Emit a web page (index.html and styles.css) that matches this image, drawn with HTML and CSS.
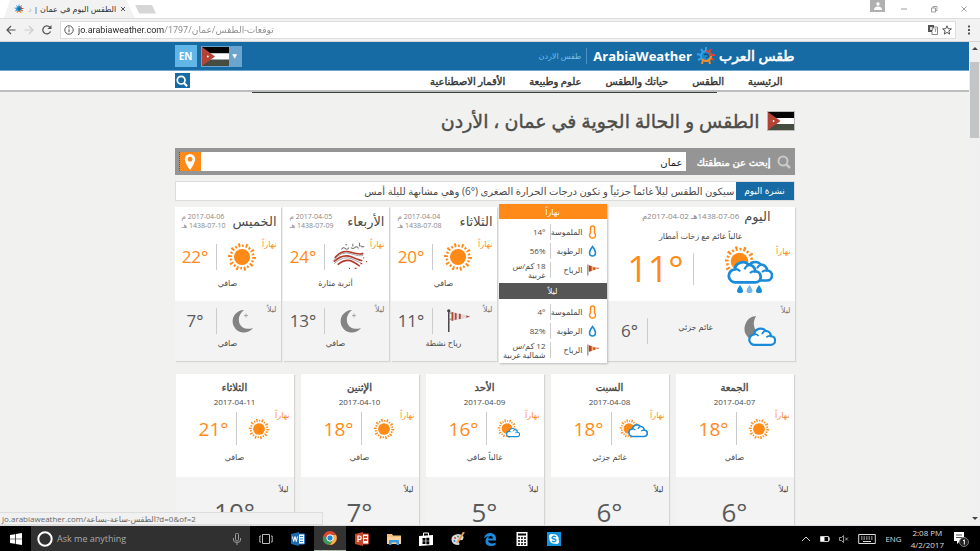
FILE: index.html
```html
<!DOCTYPE html>
<html lang="ar">
<head>
<meta charset="utf-8">
<title>الطقس اليوم في عمان</title>
<link rel="stylesheet" href="styles.css">
</head>
<body>
<svg class="sprite" aria-hidden="true">
  <symbol id="sun" viewBox="0 0 30 30">
    <circle cx="15" cy="15" r="8" fill="#ff8a17"/>
    <circle cx="15" cy="15" r="12" fill="none" stroke="#ff8a17" stroke-width="4" pathLength="10" stroke-dasharray=".26 .74"/>
    <circle cx="15" cy="15" r="11.3" fill="none" stroke="#ff8a17" stroke-width="2.400" pathLength="10" stroke-dasharray=".26 .74" stroke-dashoffset=".5"/>
  </symbol>
  <symbol id="cloud" viewBox="0 0 32 24">
    <path d="M8 21.500a6 6 0 0 1-1-12A7.500 7.500 0 0 1 20 5.500a6 6 0 0 1 6 6a5 5 0 0 1 0 10Z" fill="#fff" stroke="#1a8bd8" stroke-width="2.600"/>
    <path d="M7 9.500a5 5 0 0 1 5 2M20 5.500q-3 1-4 4M26 11.500q-3-.5-5 1.500" fill="none" stroke="#1a8bd8" stroke-width="2"/>
  </symbol>
  <symbol id="moon" viewBox="0 0 24 26">
    <path d="M14 2A11.300 11.300 0 1 0 23 20Q13 23 9.500 15.500Q7 7.500 14 2Z" fill="#838383"/>
    <path d="M16 5.500v4M14 7.500h4" stroke="#999" stroke-width=".8"/>
  </symbol>
  <symbol id="rain" viewBox="0 0 48 48">
    <use href="#sun" x="-2" y="0" width="33" height="33"/>
    <use href="#cloud" x="16" y="14" width="32" height="24"/>
    <use href="#cloud" x="1" y="14" width="37" height="26"/>
    <path d="M15 40q6 8 0 8q-6 0 0-8ZM34 40q6 8 0 8q-6 0 0-8Z" fill="#1a8bd8"/>
    <path d="M24.500 40q6 8 0 8q-6 0 0-8Z" fill="#7ab8e6"/>
  </symbol>
  <symbol id="moon-cloud" viewBox="0 0 32 34">
    <path d="M12 2A12.500 12.500 0 0 0 5 24L13 18Q7 11 12 2Z" fill="#838383"/>
    <use href="#cloud" x="4" y="12" width="28" height="21"/>
  </symbol>
  <symbol id="partly" viewBox="0 0 30 22">
    <use href="#sun" x="0" y="0" width="20" height="21"/>
    <use href="#cloud" x="9" y="4" width="20" height="17"/>
  </symbol>
  <symbol id="mostly" viewBox="0 0 24 22">
    <use href="#sun" x="0" y="0" width="20" height="21"/>
    <use href="#cloud" x="9" y="9" width="14" height="11"/>
  </symbol>
  <symbol id="dust" viewBox="0 0 38 30">
    <path d="M3 16Q10 7 20 10T33 11M2 20Q11 11 21 15T32 19M6 23Q15 16 22 20T29 25" fill="none" stroke="#b4382c" stroke-width="1.700"/>
    <path d="M1 19Q10 8 20 11.500T33 13M2 22Q13 13 21 17T31 21" fill="none" stroke="#888" stroke-width=".8"/>
    <path d="M10 7q2-3 4-1t4-1M20 5q2 2 4 0t4 1M30 3q2 2 4 1M14 2h2M22 1v3M29 0v4" fill="none" stroke="#777" stroke-width="1.100"/>
    <path d="M33 16h1M18 27h1M24 27h2M30 22h2M36 20h1" stroke="#b4382c" stroke-width="1.300"/>
  </symbol>
  <symbol id="sock" viewBox="0 0 26 26">
    <path d="M3 1v24" stroke="#444" stroke-width="1.600"/><circle cx="3" cy="2" r="1.800" fill="#444"/>
    <path d="M3 4l4 1M3 12l4-2" stroke="#777"/>
    <path d="M6 3.500L26 7.500v1.500L6 13Z" fill="#ddd"/>
    <path d="M6 3l2 .5v9l-2 .5ZM9.500 4l2 .5v7l-2 .5ZM14 5l2 .5v5l-2 .5ZM22 7l4 1l-4 1.500Z" fill="#b84434"/>
  </symbol>
  <symbol id="small-sock" viewBox="0 0 14 12">
    <path d="M2 0v12" stroke="#666"/><path d="M3 1l11 3l-11 4Z" fill="#ffb36a"/>
    <path d="M3 1l3 1v5l-3 1ZM8 3l2 .5v2l-2 .8ZM12 3.500h2v1h-2Z" fill="#b5411f"/>
  </symbol>
  <symbol id="thermo" viewBox="0 0 8 14">
    <path d="M2 8V3a2 2 0 0 1 4 0v5a3 3 0 1 1-4 0Z" fill="#fff" stroke="#ff8a17" stroke-width="1.500"/>
  </symbol>
  <symbol id="drop" viewBox="0 0 8 12">
    <path d="M4 1.500Q7 5.500 7 8a3 3 0 0 1-6 0Q1 5.500 4 1.500Z" fill="#fff" stroke="#1a8bd8" stroke-width="1.500"/>
  </symbol>
  <symbol id="flag" viewBox="0 0 28 20" preserveAspectRatio="none">
    <path d="M0 0h28v6.700H0Z" fill="#050505"/><path d="M0 6.700h28v6.600H0Z" fill="#fff"/><path d="M0 13.300h28V20H0Z" fill="#474c40"/>
    <path d="M0 0L13.500 10L0 20Z" fill="#b44336"/><circle cx="6" cy="10" r="1" fill="#fff"/>
  </symbol>
  <symbol id="lens" viewBox="0 0 14 14">
    <circle cx="6" cy="6" r="4.500" fill="none" stroke="currentColor" stroke-width="2"/><path d="M9 9l4 4" stroke="currentColor" stroke-width="2.500"/>
  </symbol>
  <symbol id="brand" viewBox="0 0 20 20">
    <path d="M10 1v4M5 3l2 3M1 8l4 1M2 14l4-2" stroke="#2ea3ec" stroke-width="2"/>
    <path d="M15 3l-2 3M19 9h-4M18 14l-4-2" stroke="#d9452f" stroke-width="2"/>
    <path d="M6 18l1-4M14 18l-1-4" stroke="#ff8a17" stroke-width="2"/>
    <circle cx="10" cy="10" r="5" fill="#1c86cc" stroke="#2ea3ec" stroke-width="2"/>
    <path d="M10 5a5 5 0 0 1 5 5" fill="none" stroke="#d9452f" stroke-width="2"/>
    <path d="M15 10a5 5 0 0 1-9 3" fill="none" stroke="#ff8a17" stroke-width="2"/>
    <path d="M8 9q2-2 4 0t-2 3" fill="none" stroke="#0f4f80" stroke-width="1.200"/>
  </symbol>
</svg>

<div class="tabs">
  <div class="tab">
    <svg class="i10"><use href="#brand"/></svg>
    <span class="tab-title" dir="rtl">الطقس اليوم في عمان | <span>د</span></span>
    <button class="plain" aria-label="Close tab"><svg class="i6" viewBox="0 0 6 6"><path d="M1 1l4 4M5 1L1 5" stroke="#555"/></svg></button>
  </div>
  <button class="new-tab" aria-label="New tab"></button>
  <div class="window">
    <span class="person"><svg class="i8" viewBox="0 0 8 8"><circle cx="4" cy="2" r="1.700" fill="#fff"/><path d="M0 8q0-3.500 4-3.500T8 8Z" fill="#fff"/></svg></span>
    <button class="plain" aria-label="Minimize"><svg class="i8" viewBox="0 0 8 8"><path d="M1 4h6" stroke="#888" stroke-width=".8"/></svg></button>
    <button class="plain" aria-label="Restore"><svg class="i8" viewBox="0 0 8 8"><path d="M1.500 3h4v4h-4ZM3 3V1.500h4v4H5.500" fill="none" stroke="#888" stroke-width=".8"/></svg></button>
    <button class="plain" aria-label="Close"><svg class="i8" viewBox="0 0 8 8"><path d="M1.500 1.500l5 5M6.500 1.500l-5 5" stroke="#888" stroke-width=".8"/></svg></button>
  </div>
</div>
<div class="toolbar">
  <button class="plain" aria-label="Back"><svg class="i10" viewBox="0 0 10 10"><path d="M9.500 5H1M5 1L1 5l4 4" fill="none" stroke="#555" stroke-width="1.200"/></svg></button>
  <button class="plain" aria-label="Forward"><svg class="i10" viewBox="0 0 10 10"><path d="M.5 5H9M5 1l4 4l-4 4" fill="none" stroke="#ccc" stroke-width="1.200"/></svg></button>
  <button class="plain" aria-label="Reload"><svg class="i10" viewBox="0 0 10 10"><path d="M8.500 6.500A4 4 0 1 1 7.800 2.200" fill="none" stroke="#555" stroke-width="1.300"/><path d="M9.500 0v4h-4Z" fill="#555"/></svg></button>
  <div class="omnibox">
    <svg class="i10" viewBox="0 0 10 10"><circle cx="5" cy="5" r="4.200" fill="none" stroke="#555"/><path d="M5 4.300v3M5 2.200v1.200" stroke="#555"/></svg>
    <input class="url" aria-label="Address" dir="ltr" value="jo.arabiaweather.com/توقعات-الطقس/عمان/1797">
    <svg class="i10" viewBox="0 0 10 10"><path d="M0 0h6v7H0Z" fill="#555"/><path d="M6 2h3.500v7.500H4V7" fill="#fff" stroke="#888"/><path d="M2 2h2.500v3H2Z" fill="#ddd"/><path d="M6.500 4h2M7.500 4v3" stroke="#777" stroke-width=".7"/></svg>
    <svg class="i10" viewBox="0 0 10 10"><path d="M5 .8l1.200 2.900l3.200.2l-2.500 2l.8 3.200L5 7.400L2.300 9.100l.8-3.200l-2.500-2l3.200-.2Z" fill="none" stroke="#444" stroke-width=".9"/></svg>
  </div>
  <button class="plain" aria-label="Menu"><svg class="i10" viewBox="0 0 10 10"><path d="M4 .5h2v2H4ZM4 4h2v2H4ZM4 7.500h2v2H4Z" fill="#555"/></svg></button>
</div>

<div class="view">
  <div class="page" dir="rtl">
    <header class="site">
      <div class="wrap site-row">
        <span class="logo-ar">طقس العرب</span>
        <svg class="i20"><use href="#brand"/></svg>
        <b class="logo-en">ArabiaWeather</b>
        <span class="country">طقس الاردن</span>
        <button class="flag-pick" aria-label="اختر الدولة"><svg><use href="#flag"/></svg><span>▼</span></button>
        <a class="lang" href="#en">EN</a>
      </div>
    </header>
    <nav class="menu">
      <div class="wrap menu-row">
        <a href="#home">الرئيسية</a><a href="#weather">الطقس</a><a href="#life">حياتك والطقس</a><a href="#science">علوم وطبيعة</a><a href="#sat">الأقمار الاصطناعية</a>
        <button class="find" aria-label="بحث"><svg class="i12"><use href="#lens"/></svg></button>
      </div>
    </nav>
    <main class="wrap">
      <div class="banner"></div>
      <h1><svg><use href="#flag"/></svg>الطقس و الحالة الجوية في عمان ، الأردن</h1>
      <form class="search">
        <label for="area"><svg class="i14"><use href="#lens"/></svg>إبحث عن منطقتك</label>
        <input id="area" type="text" value="عمان">
        <button type="button" aria-label="تحديد الموقع"><svg viewBox="0 0 12 16"><path fill-rule="evenodd" d="M6 0a5.200 5.200 0 0 1 5.200 5.200Q11 9 6 16Q1 9 .8 5.200A5.200 5.200 0 0 1 6 0ZM6 2.800a2.400 2.400 0 1 0 .01 0Z" fill="#fff"/></svg></button>
      </form>
      <div class="bulletin"><b>نشرة اليوم</b><p>سيكون الطقس ليلاً غائماً جزئياً و تكون درجات الحرارة الصغرى (°6) وهي مشابهة لليلة أمس</p></div>

      <section class="now">
        <article class="card today">
          <div class="day">
            <h2>اليوم<span><bdi dir="ltr">1438-07-06</bdi>هـ <bdi dir="ltr">2017-04-02</bdi>م</span></h2>
            <p class="cond">غالباً غائم مع زخات أمطار</p>
            <div class="parts"><span class="when">نهاراً</span><svg class="i48"><use href="#rain"/></svg><i></i><span class="temp" dir="ltr">11°</span></div>
          </div>
          <div class="night parts"><span class="when">ليلاً</span><svg class="i32"><use href="#moon-cloud"/></svg><p>غائم جزئي</p><i></i><span class="temp" dir="ltr">6°</span></div>
        </article>
        <article class="panel">
          <h3>نهاراً</h3>
          <dl>
            <div><dt><svg class="i14"><use href="#thermo"/></svg>الملموسة</dt><dd><bdi dir="ltr">14°</bdi></dd></div>
            <div><dt><svg class="i12"><use href="#drop"/></svg>الرطوبة</dt><dd><bdi dir="ltr">56%</bdi></dd></div>
            <div><dt><svg class="i12"><use href="#small-sock"/></svg>الرياح</dt><dd>18 كم/س غربية</dd></div>
          </dl>
          <h3 class="dark">ليلاً</h3>
          <dl>
            <div><dt><svg class="i14"><use href="#thermo"/></svg>الملموسة</dt><dd><bdi dir="ltr">4°</bdi></dd></div>
            <div><dt><svg class="i12"><use href="#drop"/></svg>الرطوبة</dt><dd><bdi dir="ltr">82%</bdi></dd></div>
            <div><dt><svg class="i12"><use href="#small-sock"/></svg>الرياح</dt><dd>12 كم/س شمالية غربية</dd></div>
          </dl>
        </article>
        <article class="card near">
          <div class="day"><h2>الثلاثاء<span><bdi dir="ltr">2017-04-04</bdi> م<br><bdi dir="ltr">1438-07-08</bdi> هـ</span></h2>
            <div class="parts"><span class="when">نهاراً</span><svg class="i30"><use href="#sun"/></svg><i></i><span class="temp" dir="ltr">20°</span></div><p class="cond">صافي</p></div>
          <div class="night"><div class="parts"><span class="when">ليلاً</span><svg class="i26"><use href="#sock"/></svg><i></i><span class="temp" dir="ltr">11°</span></div><p class="cond">رياح نشطة</p></div>
        </article>
        <article class="card near">
          <div class="day"><h2>الأربعاء<span><bdi dir="ltr">2017-04-05</bdi> م<br><bdi dir="ltr">1438-07-09</bdi> هـ</span></h2>
            <div class="parts"><span class="when">نهاراً</span><svg class="i36"><use href="#dust"/></svg><i></i><span class="temp" dir="ltr">24°</span></div><p class="cond">أتربة مثارة</p></div>
          <div class="night"><div class="parts"><span class="when">ليلاً</span><svg class="i26"><use href="#moon"/></svg><i></i><span class="temp" dir="ltr">13°</span></div><p class="cond">صافي</p></div>
        </article>
        <article class="card near">
          <div class="day"><h2>الخميس<span><bdi dir="ltr">2017-04-06</bdi> م<br><bdi dir="ltr">1438-07-10</bdi> هـ</span></h2>
            <div class="parts"><span class="when">نهاراً</span><svg class="i30"><use href="#sun"/></svg><i></i><span class="temp" dir="ltr">22°</span></div><p class="cond">صافي</p></div>
          <div class="night"><div class="parts"><span class="when">ليلاً</span><svg class="i26"><use href="#moon"/></svg><i></i><span class="temp" dir="ltr">7°</span></div><p class="cond">صافي</p></div>
        </article>
      </section>

      <section class="later">
        <article class="card far"><div class="day"><h2>الجمعة</h2><time>2017-04-07</time><div class="parts"><span class="when">نهاراً</span><svg class="i22"><use href="#sun"/></svg><i></i><span class="temp" dir="ltr">18°</span></div><p class="cond">صافي</p></div><div class="night"><span class="when">ليلاً</span><span class="temp" dir="ltr">6°</span></div></article>
        <article class="card far"><div class="day"><h2>السبت</h2><time>2017-04-08</time><div class="parts"><span class="when">نهاراً</span><svg class="i30"><use href="#partly"/></svg><i></i><span class="temp" dir="ltr">18°</span></div><p class="cond">غائم جزئي</p></div><div class="night"><span class="when">ليلاً</span><span class="temp" dir="ltr">6°</span></div></article>
        <article class="card far"><div class="day"><h2>الأحد</h2><time>2017-04-09</time><div class="parts"><span class="when">نهاراً</span><svg class="i24"><use href="#mostly"/></svg><i></i><span class="temp" dir="ltr">16°</span></div><p class="cond">غالباً صافي</p></div><div class="night"><span class="when">ليلاً</span><span class="temp" dir="ltr">5°</span></div></article>
        <article class="card far"><div class="day"><h2>الإثنين</h2><time>2017-04-10</time><div class="parts"><span class="when">نهاراً</span><svg class="i22"><use href="#sun"/></svg><i></i><span class="temp" dir="ltr">18°</span></div><p class="cond">صافي</p></div><div class="night"><span class="when">ليلاً</span><span class="temp" dir="ltr">7°</span></div></article>
        <article class="card far"><div class="day"><h2>الثلاثاء</h2><time>2017-04-11</time><div class="parts"><span class="when">نهاراً</span><svg class="i22"><use href="#sun"/></svg><i></i><span class="temp" dir="ltr">21°</span></div><p class="cond">صافي</p></div><div class="night"><span class="when">ليلاً</span><span class="temp" dir="ltr">10°</span></div></article>
      </section>
    </main>
  </div>
  <div class="scroll"><svg class="i6" viewBox="0 0 6 6"><path d="M0 5l3-3l3 3Z" fill="#444"/></svg><span></span><svg class="i6" viewBox="0 0 6 6"><path d="M0 1l3 3l3-3Z" fill="#444"/></svg></div>
  <div class="status" dir="ltr">jo.arabiaweather.com/الطقس-ساعة-بساعة?d=0&amp;of=2</div>
</div>

<footer class="taskbar">
  <button class="start" aria-label="Start"><svg class="i12" viewBox="0 0 12 12"><path d="M0 2l5-.8v4.500H0ZM5.700 1L12 0v5.700H5.700ZM0 6.300h5v4.500L0 10ZM5.700 6.300H12V12l-6.300-1Z" fill="#fff"/></svg></button>
  <label class="ask"><svg class="i16" viewBox="0 0 16 16"><circle cx="8" cy="8" r="6.700" fill="none" stroke="#fff" stroke-width="2"/></svg><input type="text" aria-label="Ask me anything" placeholder="Ask me anything"><svg class="i12" viewBox="0 0 12 12"><path d="M4.500 1.500a1.500 1.500 0 0 1 3 0v5a1.500 1.500 0 0 1-3 0ZM2.500 5v2q0 2.500 3.500 2.500T9.500 7V5M6 9.500V12" fill="none" stroke="#999"/></svg></label>
  <button class="app" aria-label="Task view"><svg class="i14" viewBox="0 0 14 14"><path d="M3.500 2.500h7v9h-7ZM2 4H.8v6H2M12 4h1.200v6H12" fill="none" stroke="#bbb"/></svg></button>
  <button class="app" aria-label="Word"><svg class="i14" viewBox="0 0 14 14"><path d="M7 2h6.500v10H7Z" fill="#fff" stroke="#2b7cc0"/><path d="M9 4.500h3M9 7h3M9 9.500h3" stroke="#2b7cc0"/><path d="M0 2l8-2v14l-8-2Z" fill="#1c6bb0"/><path d="M1.500 4.500l1.200 5l1.300-5l1.300 5l1.200-5" fill="none" stroke="#fff"/></svg></button>
  <button class="app on" aria-label="Chrome"><svg class="i14" viewBox="0 0 14 14"><circle cx="7" cy="7" r="7" fill="#d9482f"/><path d="M0 5a7 7 0 0 0 7 9l2-5Z" fill="#3c9a56"/><path d="M7 14a7 7 0 0 0 6-10H7l3 5Z" fill="#f6b73c"/><circle cx="7" cy="7" r="3.200" fill="#2a83d4" stroke="#fff"/></svg></button>
  <button class="app" aria-label="PowerPoint"><svg class="i14" viewBox="0 0 14 14"><path d="M7 2h6.500v10H7Z" fill="#fff" stroke="#c8472c"/><path d="M9 5h3M9 8h3" stroke="#c8472c" stroke-width="2"/><path d="M0 2l8-2v14l-8-2Z" fill="#c8472c"/><path d="M3 10V4h1.500a1.500 1.500 0 0 1 0 3.500H3" fill="none" stroke="#fff" stroke-width="1.200"/></svg></button>
  <button class="app" aria-label="Files"><svg class="i14" viewBox="0 0 14 14"><path d="M0 2h5l1 1.500h8V12H0Z" fill="#f3c077"/><path d="M0 5h14v7H0Z" fill="#fbd09a"/><path d="M2 13V8h10v5H9.500v-2.500h-5V13Z" fill="#3a9be0"/></svg></button>
  <button class="app" aria-label="Store"><svg class="i14" viewBox="0 0 14 14"><path d="M0 4l14-1v10L0 14Z" fill="#fff"/><path d="M4.500 4V1h5V4" fill="none" stroke="#fff"/><path d="M3.500 6h3v2.700h-3ZM7.300 5.800h3v2.900h-3ZM3.500 9.300h3V12h-3ZM7.300 9.300h3v2.900h-3Z" fill="#000"/></svg></button>
  <button class="app" aria-label="Paint"><svg class="i14" viewBox="0 0 14 14"><path d="M7 2Q0 3 .5 8t7 5q2-1 0-3t4-2Q15 3 7 2Z" fill="#d7dce3"/><circle cx="4" cy="6" r="1" fill="#c8472c"/><circle cx="3.500" cy="9" r="1" fill="#2a83d4"/><circle cx="7" cy="4.500" r="1" fill="#3c9a56"/><path d="M13 0L6 11" stroke="#e99b45" stroke-width="2"/></svg></button>
  <button class="app" aria-label="Edge"><svg class="i14" viewBox="0 0 14 14"><path d="M1 6.500Q2 1 7.500 1T13 7.500v1H5q.5 3 4 3q2 0 3.500-1V13q-2 1-4 1Q2 14 2.500 8.500Q3 5 6.500 4Q3 4 1 6.500ZM5.200 6.500H10Q10 4 7.700 4T5.200 6.500Z" fill="#1b8ae0" fill-rule="evenodd"/></svg></button>
  <button class="app" aria-label="Calculator"><svg class="i14" viewBox="0 0 14 14"><path d="M1.500 0h11v14h-11Z" fill="#fff"/><path d="M3 1.500h8v2H3Z" fill="#000"/><path d="M3 6h8M3 9h8M3 12h8" stroke="#000" stroke-width="1.500" stroke-dasharray="2 1"/></svg></button>
  <button class="app" aria-label="Skype"><svg class="i14" viewBox="0 0 14 14"><path d="M0 0h14v14H0Z" fill="#0f95de"/><circle cx="7" cy="7" r="4.700" fill="#fff"/><circle cx="4.500" cy="4.500" r="2.500" fill="#fff"/><circle cx="9.500" cy="9.500" r="2.500" fill="#fff"/><path d="M9 5Q7 3.500 5.500 5T7 7t1.500 2T5 9" fill="none" stroke="#0f95de" stroke-width="1.300"/></svg></button>
  <div class="tray">
    <svg class="i10" viewBox="0 0 10 10"><path d="M1 7l4-4l4 4" fill="none" stroke="#ccc"/></svg>
    <svg class="i10" viewBox="0 0 10 10"><path d="M.5 2.500h8v5h-8ZM9 4h1v2H9Z" fill="none" stroke="#ccc"/><path d="M1 3h3.500v4H1Z" fill="#fff"/></svg>
    <svg class="i10" viewBox="0 0 10 10"><path d="M.5 3.500h2l2-2v7l-2-2h-2ZM6 3.500l3 3M9 3.500l-3 3" fill="none" stroke="#bbb" stroke-width=".8"/></svg>
    <svg class="i18" viewBox="0 0 18 12"><path d="M.7 1.500h16.600v9H.7Z" fill="none" stroke="#ddd"/><path d="M3 4h12M3 6h12" stroke="#ddd" stroke-dasharray="1.500 1"/><path d="M5 8.500h8" stroke="#ddd"/></svg>
    <span>ENG</span>
    <span class="clock">2:08 PM<br>4/2/2017</span>
    <svg class="i16" viewBox="0 0 16 16"><path d="M1 1h10v9H7l-3 3v-3H1Z" fill="#fff"/><path d="M3 4h6M3 6.500h6" stroke="#555"/><circle cx="11" cy="11" r="4.500" fill="#222" stroke="#777"/><path d="M10 10l1.300-1.300V13.500" fill="none" stroke="#fff"/></svg>
  </div>
</footer>
</body>
</html>
```

FILE: styles.css
```css
* { box-sizing: border-box; margin: 0; padding: 0; }
body { display: flex; flex-direction: column; height: 100vh; overflow: hidden; background: #fff; color: #4a4a4a; font: 8px/10px "Open Sans", "DejaVu Sans", sans-serif; }
button, input { font: inherit; border: 0; background: none; min-width: 0; }
a { color: inherit; text-decoration: none; }
svg { display: block; flex: none; }
.sprite { position: absolute; width: 0; height: 0; }
.i6 { width: 6px; height: 6px; } .i8 { width: 8px; height: 8px; } .i10 { width: 10px; height: 10px; }
.i12 { width: 12px; height: 12px; } .i14 { width: 14px; height: 14px; } .i16 { width: 16px; height: 16px; }
.i18 { width: 18px; height: 12px; } .i20 { width: 20px; height: 20px; } .i22 { width: 22px; height: 22px; }
.i24 { width: 24px; height: 22px; } .i26 { width: 24px; height: 26px; } .i30 { width: 30px; height: 30px; }
.i32 { width: 32px; height: 34px; } .i36 { width: 36px; height: 30px; } .i48 { width: 48px; height: 48px; }
.plain { display: grid; place-items: center; width: 10px; height: 10px; }

.tabs { display: flex; align-items: flex-end; flex: none; height: 19px; border-bottom: 1px solid #ddd; }
.tab { display: flex; align-items: center; gap: 4px; height: 18px; margin-left: 4px; padding: 0 9px 0 10px; background: #f2f2f2; clip-path: polygon(6px 0, 122px 0, 100% 100%, 0 100%); width: 131px; }
.tab-title { flex: 1; white-space: nowrap; color: #333; }
.tab-title span { color: #bbb; }
.new-tab { align-self: center; width: 21px; height: 9px; background: #d6d6d6; clip-path: polygon(0 0, 80% 0, 100% 100%, 20% 100%); }
.window { display: flex; align-items: center; gap: 20px; height: 18px; margin-left: auto; padding-right: 11px; }
.person { display: grid; place-items: center; align-self: flex-start; width: 15px; height: 12px; margin-right: -6px; background: #b0b0b0; }
.toolbar { display: flex; align-items: center; flex: none; gap: 8px; height: 23px; padding: 0 6px; background: #f2f2f2; border-bottom: 1px solid #d5d5d5; }
.omnibox { display: flex; align-items: center; flex: 1; gap: 4px; height: 18px; padding: 0 3px; background: #fff; border: 1px solid #ddd; }
.url { flex: 1; font-family: Roboto, "DejaVu Sans", sans-serif; font-size: 9px; height: 16px; background: linear-gradient(to right, #222 86px, #888 86px); -webkit-background-clip: text; background-clip: text; color: transparent; }

.view { position: relative; display: flex; flex: 1; min-height: 0; border-bottom: 1px solid #ddd; }
.page { flex: 1; min-width: 0; overflow: hidden; background: #f1f1f0; }
.wrap { width: 100%; max-width: 620px; margin: 0 auto; }
.site { background: #176ba4; border-bottom: 1px solid #6da7ce; color: #fff; }
.site-row { display: flex; align-items: center; height: 28px; }
.logo-ar { font-size: 14px; line-height: 20px; margin-left: 3px; -webkit-text-stroke: .6px; }
.logo-en { font-size: 13px; line-height: 20px; margin: 0 4px 0 6px; }
.country { padding-right: 5px; border-right: 1px solid #4b93c6; line-height: 16px; color: #74bfec; }
.flag-pick { display: flex; align-items: center; direction: ltr; width: 41px; height: 21px; margin-right: auto; background: #6aa4cf; border: 1px solid #6aa4cf; color: #fff; font-size: 6px; }
.flag-pick svg { width: 27px; height: 19px; }
.flag-pick span { flex: 1; text-align: center; }
.lang { width: 22px; margin-right: 4px; background: #62b6e7; font-size: 10px; font-weight: 700; line-height: 22px; text-align: center; }
.menu { background: #fff; border-bottom: 2px solid #bbbdbe; }
.menu-row { display: flex; align-items: center; gap: 24px; height: 19px; padding-right: 12px; color: #333; font-size: 10px; -webkit-text-stroke: .4px; white-space: nowrap; }
.find { display: grid; place-items: center; width: 15px; height: 15px; margin-right: auto; background: #176ba4; color: #fff; }
.banner { width: 75%; height: 1px; margin-right: 78px; background: #3b403b; }
h1 { display: flex; align-items: center; gap: 7px; height: 55px; color: #4d4d49; font-size: 19px; line-height: 30px; white-space: nowrap; font-weight: 400; -webkit-text-stroke: .4px; }
h1 svg { width: 28px; height: 20px; border: 1px solid #bbb; }
.search { display: flex; height: 27px; padding: 4px; background: #959595; }
.search label { display: flex; align-items: center; gap: 6px; width: 105px; color: #fff; font-size: 10px; -webkit-text-stroke: .4px; white-space: nowrap; }
.search label svg { color: #c9c9c9; }
.search input { flex: 1; padding: 0 3px; background: #fff; color: #222; font-size: 10px; }
.search button { display: grid; place-items: center; width: 22px; background: #ff8a17; border-left: 1px dotted #555; }
.search button svg { width: 12px; height: 16px; }
.bulletin { display: flex; height: 20px; margin-top: 6px; background: #fff; border: 1px solid #dcdcdc; line-height: 18px; font-size: 10px; white-space: nowrap; }
.bulletin b { width: 58px; background: #176ba4; color: #fff; text-align: center; font-size: 9px; font-weight: 400; }
.bulletin p { flex: 1; padding-right: 1px; }

.now { display: flex; align-items: flex-start; gap: 2px; margin-top: 6px; }
.card { min-width: 0; background: #fff; box-shadow: 1px 1px 1px #d4d4d4; }
.night { background: #f3f3f3; }
.when { color: #777; }
.day .when { color: #ff8a17; }
.temp { color: #5a5a5a; font-size: 17px; line-height: 24px; text-align: center; }
.day .temp { color: #ff8a17; }
.parts { display: grid; align-items: center; justify-items: center; white-space: nowrap; }
.parts .when { align-self: start; justify-self: start; }
.parts i { width: 1px; height: 26px; background: #ccc; justify-self: end; }
.cond { text-align: center; }
.today { flex: 188; margin-left: -2px; }
.today .day { height: 94px; padding-top: 2px; }
.today h2 { display: flex; align-items: center; gap: 5px; padding-right: 24px; font-size: 13px; font-weight: 400; line-height: 14px; }
h2 span { color: #888; font-size: 8px; }
.today .cond { margin-top: 8px; }
.today .day .parts { grid-template-columns: 18px 48px 32px 1fr; height: 54px; margin-top: 1px; padding: 0 4px 0 12px; }
.today .day .when { padding-top: 4px; }
.today .day .temp { font-size: 36px; line-height: 40px; }
.today .day i { height: 32px; }
.today .night { grid-template-columns: 15px 32px 86px 11px 1fr; height: 60px; padding: 4px 4px 4px 6px; }
.today .night p { padding: 0 10px 8px 0; }
.panel { flex: 108; min-width: 0; margin-top: -3px; background: #fff; box-shadow: 1px 1px 2px #bbb; }
.panel h3 { background: #ff8a17; color: #fff; font-size: 8px; line-height: 15px; font-weight: 400; text-align: center; }
.panel h3.dark { background: #555; line-height: 16px; }
.panel dl { padding: 3px 8px 4px 0; }
.panel dl div { display: grid; grid-template-columns: 49px 1fr; align-items: center; height: 19px; }
.panel dt { display: flex; align-items: center; gap: 3px; border-left: 1px solid #ccc; height: 16px; }
.panel dt svg { width: 13px; }
.panel dd { padding-right: 4px; line-height: 9px; }
.near { flex: 106; }
.near .day { height: 94px; }
.near h2 { display: flex; align-items: center; justify-content: space-between; height: 27px; padding: 0 4px 0 7px; font-size: 13px; font-weight: 400; white-space: nowrap; }
.near h2 span { font-size: 7px; line-height: 9px; text-align: left; }
.near .parts { grid-template-columns: 18px 34px 9px 1fr; height: 34px; padding-right: 4px; }
.near .day .parts { height: 44px; padding-top: 5px; padding-bottom: 3px; }
.near .night { height: 60px; padding-top: 3px; }
.near .cond { line-height: 10px; }

.later { display: grid; grid-template-columns: repeat(5, 1fr); gap: 7px; margin-top: 11px; padding: 0 1px; }
.far .day { height: 103px; padding-top: 6px; text-align: center; }
.far h2 { font-size: 10px; line-height: 14px; font-weight: 400; -webkit-text-stroke: .4px; }
.far time { display: block; line-height: 16px; }
.far .parts { grid-template-columns: 18px 26px 10px 1fr; height: 37px; padding: 0 4px 0 16px; }
.far .day .temp { font-size: 19px; }
.far .parts i { height: 33px; }
.far .cond { margin-top: 5px; }
.far .night { display: flex; flex-direction: column; height: 90px; padding: 7px 5px; }
.far .night .when { color: #444; }
.far .night .temp { font-size: 26px; line-height: 36px; }
.scroll { display: flex; flex-direction: column; align-items: center; flex: none; width: 11px; padding: 3px 0; background: #f0f0f0; }
.scroll span { width: 9px; height: 76px; margin: 11px 0 auto; background: #c2c4c5; }
.status { position: absolute; left: 0; bottom: 0; width: 33%; height: 13px; padding-left: 2px; background: #f1f1f1; border: 1px solid #ddd; border-left: 0; color: #666; line-height: 12px; white-space: nowrap; }

.taskbar { display: flex; flex: none; height: 25px; background: #000; color: #ddd; }
.start { display: grid; place-items: center; width: 31px; }
.app { display: grid; place-items: center; width: 32px; }
.app.on { background: #333; border-bottom: 1px solid #a8b8a8; }
.ask { display: flex; align-items: center; gap: 4px; width: 219px; padding: 0 7px 0 6px; background: #303030; }
.ask input { flex: 1; font-size: 9px; color: #ddd; }
.ask input::placeholder { color: #aaa; }
.tray { display: flex; align-items: center; gap: 9px; margin-left: auto; padding-right: 11px; }
.clock { line-height: 12px; text-align: center; }
```
